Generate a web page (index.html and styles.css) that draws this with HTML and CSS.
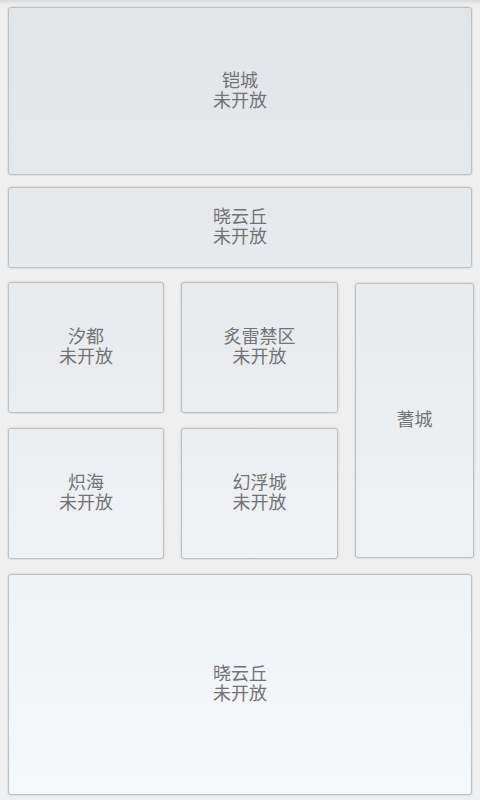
FILE: index.html
```html
<!DOCTYPE html>
<html lang="zh">
<head>
<meta charset="utf-8">
<title>城</title>
<link rel="stylesheet" href="styles.css">
</head>
<body>
<div class="page">
  <div class="card card-top"><span>铠城<br>未开放</span></div>
  <div class="card card-mid"><span>晓云丘<br>未开放</span></div>
  <div class="grid">
    <div class="card"><span>汐都<br>未开放</span></div>
    <div class="card"><span>炙雷禁区<br>未开放</span></div>
    <div class="card tall"><span>蓍城</span></div>
    <div class="card"><span>炽海<br>未开放</span></div>
    <div class="card"><span>幻浮城<br>未开放</span></div>
  </div>
  <div class="card card-bottom"><span>晓云丘<br>未开放</span></div>
</div>
</body>
</html>
```

FILE: styles.css
```css
html, body {
  margin: 0;
  padding: 0;
  width: 480px;
  height: 800px;
  overflow: hidden;
  background: #efefef;
  font-family: "Noto Sans CJK SC", "Noto Sans", sans-serif;
}

.page {
  box-sizing: border-box;
  height: 800px;
  padding: 7px 8px 5px 8px;
  display: flex;
  flex-direction: column;
  background: linear-gradient(to bottom, #d9d9d9 0px, #ececec 4px, #efefef 7px);
}

.card {
  box-sizing: border-box;
  display: flex;
  align-items: center;
  justify-content: center;
  text-align: center;
  padding-bottom: 5px;
  border: 1px solid #bcc0c3;
  border-radius: 3px;
  box-shadow: 0 0 2px rgba(0, 0, 0, 0.22);
  background: linear-gradient(to bottom, #e2e5e8 0px, #e8ebee 300px, #f6f9fc 800px) fixed;
  color: #737373;
  font-size: 18px;
  line-height: 20px;
}

.card-top {
  height: 168px;
}

.card-mid {
  height: 81px;
  margin-top: 12px;
}

.grid {
  margin-top: 14px;
  display: grid;
  grid-template-columns: 156px 157px 119px;
  grid-template-rows: 131px 131px;
  column-gap: 17px;
  row-gap: 15px;
}

.grid .tall {
  grid-column: 3;
  grid-row: 1 / span 2;
  margin: 1px 0;
}

.card-bottom {
  margin-top: 15px;
  flex: 1;
}
```
